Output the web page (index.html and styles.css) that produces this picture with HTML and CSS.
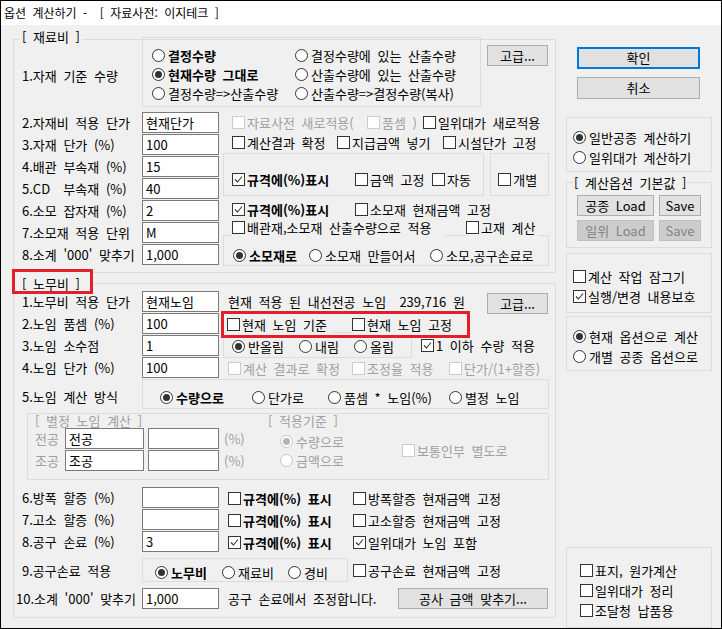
FILE: index.html
```html
<!DOCTYPE html>
<html lang="ko">
<head>
<meta charset="utf-8">
<title>옵션 계산하기</title>
<link rel="stylesheet" href="styles.css">
</head>
<body>
<div class="win">
  <div class="title">옵션 계산하기 -&nbsp; [ 자료사전: 이지테크 ]</div>
  <div class="main">
    <div class="left">
      <section class="grp g1">
        <span class="legend">[ 재료비 ]</span>
        <div class="r1">
          <div class="lbl l1lbl">1.자재 기준 수량</div>
          <div class="rbox">
            <span class="rb b"><i class="rd"></i>결정수량</span>
            <span class="rb"><i class="rd"></i>결정수량에 있는 산출수량</span>
            <span class="rb b"><i class="rd on"></i>현재수량 그대로</span>
            <span class="rb"><i class="rd"></i>산출수량에 있는 산출수량</span>
            <span class="rb"><i class="rd"></i>결정수량=&gt;산출수량</span>
            <span class="rb"><i class="rd"></i>산출수량=&gt;결정수량(복사)</span>
          </div>
          <button class="btn adv">고급...</button>
        </div>
        <div class="r2">
          <div class="fields">
            <div class="row"><div class="lbl">2.자재비 적용 단가</div><div class="inp">현재단가</div></div>
            <div class="row"><div class="lbl">3.자재 단가 (%)</div><div class="inp">100</div></div>
            <div class="row"><div class="lbl">4.배관 부속재 (%)</div><div class="inp">15</div></div>
            <div class="row"><div class="lbl">5.CD  부속재 (%)</div><div class="inp">40</div></div>
            <div class="row"><div class="lbl">6.소모 잡자재 (%)</div><div class="inp">2</div></div>
            <div class="row"><div class="lbl">7.소모재 적용 단위</div><div class="inp">M</div></div>
            <div class="row"><div class="lbl">8.소계 '000' 맞추기</div><div class="inp">1,000</div></div>
          </div>
          <div class="opts">
            <div class="ln lnA">
              <span class="cb dis"><i></i>자료사전 새로적용(</span>
              <span class="cb dis"><i></i>품셈 )</span>
              <span class="cb"><i></i>일위대가 새로적용</span>
            </div>
            <div class="ln lnB">
              <span class="cb"><i></i>계산결과 확정</span>
              <span class="cb"><i></i>지급금액 넣기</span>
              <span class="cb"><i></i>시설단가 고정</span>
            </div>
            <div class="boxes">
              <div class="bx bx1">
                <span class="cb b"><i class="on"><svg viewBox="0 0 11 11" width="11" height="11"><path d="M2 5.5 L4.5 8 L9 2.5" fill="none" stroke="#333" stroke-width="1.1"/></svg></i>규격에(%)표시</span>
                <span class="cb"><i></i>금액 고정</span>
                <span class="cb"><i></i>자동</span>
              </div>
              <div class="bx bx2"><span class="cb"><i></i>개별</span></div>
            </div>
            <div class="ln lnC">
              <span class="cb b"><i class="on"><svg viewBox="0 0 11 11" width="11" height="11"><path d="M2 5.5 L4.5 8 L9 2.5" fill="none" stroke="#333" stroke-width="1.1"/></svg></i>규격에(%)표시</span>
              <span class="cb"><i></i>소모재 현재금액 고정</span>
            </div>
            <div class="ln lnD">
              <span class="cb"><i></i>배관재,소모재 산출수량으로 적용</span>
              <span class="cb"><i></i>고재 계산</span>
            </div>
            <div class="bx bxE">
              <span class="rb b"><i class="rd on"></i>소모재로</span>
              <span class="rb"><i class="rd"></i>소모재 만들어서</span>
              <span class="rb"><i class="rd"></i>소모,공구손료로</span>
            </div>
          </div>
        </div>
      </section>

      <section class="grp g2">
        <span class="legend red">[ 노무비 ]</span>
        <div class="t2">
          <div class="fields">
            <div class="row"><div class="lbl">1.노무비 적용 단가</div><div class="inp">현재노임</div></div>
            <div class="row"><div class="lbl">2.노임 품셈 (%)</div><div class="inp">100</div></div>
            <div class="row"><div class="lbl">3.노임 소수점</div><div class="inp">1</div></div>
            <div class="row"><div class="lbl">4.노임 단가 (%)</div><div class="inp">100</div></div>
          </div>
          <div class="opts">
            <div class="ln2 ln2a">
              <span class="txt">현재 적용 된 내선전공 노임&nbsp; 239,716 원</span>
              <button class="btn adv2">고급...</button>
            </div>
            <div class="redbox">
              <span class="cb"><i></i>현재 노임 기준</span>
              <span class="cb"><i></i>현재 노임 고정</span>
            </div>
            <div class="ln2 ln2c">
              <div class="bx box3">
                <span class="rb"><i class="rd on"></i>반올림</span>
                <span class="rb"><i class="rd"></i>내림</span>
                <span class="rb"><i class="rd"></i>올림</span>
              </div>
              <span class="cb"><i class="on"><svg viewBox="0 0 11 11" width="11" height="11"><path d="M2 5.5 L4.5 8 L9 2.5" fill="none" stroke="#333" stroke-width="1.1"/></svg></i>1 이하 수량 적용</span>
            </div>
            <div class="ln ln2d">
              <span class="cb dis"><i></i>계산 결과로 확정</span>
              <span class="cb dis"><i></i>조정율 적용</span>
              <span class="cb dis"><i></i>단가/(1+할증)</span>
            </div>
          </div>
        </div>

        <div class="row5">
          <div class="lbl">5.노임 계산 방식</div>
          <div class="bx box5">
            <span class="rb b"><i class="rd on"></i>수량으로</span>
            <span class="rb"><i class="rd"></i>단가로</span>
            <span class="rb"><i class="rd"></i>품셈 * 노임(%)</span>
            <span class="rb"><i class="rd"></i>별정 노임</span>
          </div>
        </div>

        <div class="bx bj">
          <div class="bjc1">
            <div class="hdr">[ 별정 노임 계산 ]</div>
            <div class="bjrow"><span class="bjl">전공</span><div class="inp i1">전공</div><div class="inp i2"></div><span class="pct">(%)</span></div>
            <div class="bjrow"><span class="bjl">조공</span><div class="inp i1">조공</div><div class="inp i2"></div><span class="pct">(%)</span></div>
          </div>
          <div class="bjc2">
            <div class="hdr">[ 적용기준 ]</div>
            <span class="rb dis first"><i class="rd on"></i>수량으로</span>
            <span class="rb dis"><i class="rd"></i>금액으로</span>
          </div>
          <div class="bjc3">
            <span class="cb dis"><i></i>보통인부 별도로</span>
          </div>
        </div>

        <div class="rows68">
          <div class="row">
            <div class="lbl">6.방폭 할증 (%)</div><div class="inp"></div>
            <div class="ctl2">
              <span class="cb b"><i></i>규격에(%) 표시</span>
              <span class="cb"><i></i>방폭할증 현재금액 고정</span>
            </div>
          </div>
          <div class="row">
            <div class="lbl">7.고소 할증 (%)</div><div class="inp"></div>
            <div class="ctl2">
              <span class="cb b"><i></i>규격에(%) 표시</span>
              <span class="cb"><i></i>고소할증 현재금액 고정</span>
            </div>
          </div>
          <div class="row">
            <div class="lbl">8.공구 손료 (%)</div><div class="inp">3</div>
            <div class="ctl2">
              <span class="cb b"><i class="on"><svg viewBox="0 0 11 11" width="11" height="11"><path d="M2 5.5 L4.5 8 L9 2.5" fill="none" stroke="#333" stroke-width="1.1"/></svg></i>규격에(%) 표시</span>
              <span class="cb"><i class="on"><svg viewBox="0 0 11 11" width="11" height="11"><path d="M2 5.5 L4.5 8 L9 2.5" fill="none" stroke="#333" stroke-width="1.1"/></svg></i>일위대가 노임 포함</span>
            </div>
          </div>
        </div>

        <div class="row9">
          <div class="lbl">9.공구손료 적용</div>
          <div class="bx box9">
            <span class="rb b"><i class="rd on"></i>노무비</span>
            <span class="rb"><i class="rd"></i>재료비</span>
            <span class="rb"><i class="rd"></i>경비</span>
          </div>
          <span class="cb"><i></i>공구손료 현재금액 고정</span>
        </div>

        <div class="row10">
          <div class="lbl">10.소계 '000' 맞추기</div>
          <div class="inp">1,000</div>
          <span class="txt">공구 손료에서 조정합니다.</span>
          <button class="btn fit">공사 금액 맞추기...</button>
        </div>
      </section>
    </div>

    <div class="right">
      <button class="btn def">확인</button>
      <button class="btn cancel">취소</button>
      <div class="bx rA">
        <span class="rb"><i class="rd on"></i>일반공종 계산하기</span>
        <span class="rb"><i class="rd"></i>일위대가 계산하기</span>
      </div>
      <div class="bx rB">
        <span class="legend lg2">[ 계산옵션 기본값 ]</span>
        <div class="ld">
          <button class="btn">공종 Load</button>
          <button class="btn">Save</button>
          <button class="btn off">일위 Load</button>
          <button class="btn off">Save</button>
        </div>
      </div>
      <div class="bx rC">
        <span class="cb"><i></i>계산 작업 잠그기</span>
        <span class="cb"><i class="on"><svg viewBox="0 0 11 11" width="11" height="11"><path d="M2 5.5 L4.5 8 L9 2.5" fill="none" stroke="#333" stroke-width="1.1"/></svg></i>실행/변경 내용보호</span>
      </div>
      <div class="bx rD">
        <span class="rb"><i class="rd on"></i>현재 옵션으로 계산</span>
        <span class="rb"><i class="rd"></i>개별 공종 옵션으로</span>
      </div>
      <div class="bx rE">
        <span class="cb"><i></i>표지, 원가계산</span>
        <span class="cb"><i></i>일위대가 정리</span>
        <span class="cb"><i></i>조달청 납품용</span>
      </div>
    </div>
  </div>
</div>
</body>
</html>
```

FILE: styles.css
```css
* { box-sizing: border-box; }
html, body { margin: 0; padding: 0; }
body { width: 722px; height: 629px; overflow: hidden; background: #f0f0f0; }

.win {
  width: 722px; height: 629px;
  border: 1px solid #000;
  background: #f0f0f0;
  font-family: "Noto Sans CJK KR", "Noto Sans", sans-serif;
  font-size: 13px;
  line-height: 19px;
  color: #000;
  word-spacing: 3px;
}
.title {
  height: 24px; background: #fff;
  font-size: 12px; line-height: 23px;
  padding-left: 3px; white-space: pre;
}
.main { display: flex; padding: 14px 0 0 12px; height: 603px; }
.left { width: 543px; display: flex; flex-direction: column; gap: 10px; }

/* group boxes */
.grp { position: relative; border: 1px solid #dcdcdc; }
.g1 { height: 234px; }
.g2 { height: 335px; padding-top: 7px; }
.bx { border: 1px solid #dcdcdc; }
.legend {
  position: absolute; top: -13px; left: 6px;
  padding: 0 2px; background: #f0f0f0; white-space: pre;
}
.legend.red {
  left: -2px; top: -15px; width: 81px; height: 25px;
  border: 3px solid #e3202a; padding: 4px 0 0 7px;
  line-height: 15px;
}

/* generic controls */
.lbl { width: 128px; padding-left: 8px; white-space: pre; line-height: 21px; }
.row { display: flex; height: 22px; }
.inp {
  width: 77px; height: 21px; background: #fff;
  border: 1px solid #7a7a7a; padding-left: 3px;
  line-height: 19px; white-space: pre; overflow: hidden;
}
.cb, .rb {
  display: inline-flex; align-items: center; white-space: pre;
  height: 19px; background: #f0f0f0;
}
.cb i {
  flex: none; width: 13px; height: 13px; margin-right: 2px;
  border: 1px solid #333; background: #fff;
  display: flex; align-items: center; justify-content: center;
}
.rb i {
  flex: none; position: relative; width: 13px; height: 13px; margin-right: 3px;
  border: 1px solid #333; border-radius: 50%; background: #fff;
}
.rb i.on::after {
  content: ""; position: absolute; inset: 2px;
  border-radius: 50%; background: #333;
}
.b { font-weight: bold; }
.dis { color: #a0a0a0; }
.cb.dis i { border-color: #cccccc; }
.rb.dis i { border-color: #c4c4c4; }
.rb.dis i.on::after { background: #b4b4b4; }

.btn {
  font: inherit; word-spacing: inherit; color: #000;
  background: #e1e1e1; border: 1px solid #adadad;
  padding: 0; height: 21px; line-height: 18px;
}
.btn.def { border: 2px solid #0078d7; }
.btn.off { background: #cccccc; border-color: #bfbfbf; color: #838383; }

/* group 1 */
.r1 { display: flex; margin-top: -3px; }
.l1lbl { align-self: center; padding-top: 7px; }
.rbox {
  width: 339px; height: 70px; padding: 8px 0 0 9px;
  border: 1px solid #dcdcdc;
  display: grid; grid-template-columns: 143px auto; grid-auto-rows: 19px;
}
.adv { margin: 8px 0 0 6px; width: 61px; }
.r2 { display: flex; margin-top: 5px; }
.t2 { display: flex; }
.fields { width: 205px; }
.opts { margin-left: 4px; width: 326px; }
.ln { display: grid; align-items: center; justify-items: start; padding-left: 9px; }
.lnA { height: 20px; grid-template-columns: 135px 56px auto; }
.lnB { height: 21px; grid-template-columns: 105px 106px auto; }
.boxes { display: flex; gap: 6px; height: 43px; }
.bx1 {
  width: 262px; padding: 16px 0 0 8px;
  display: grid; grid-template-columns: 123px 77px auto; align-content: start;
}
.bx2 { width: 59px; padding: 16px 0 0 7px; }
.lnC { height: 18px; margin-top: 4px; grid-template-columns: 123px auto; }
.lnD { height: 18px; grid-template-columns: 234px auto; }
.lnD .cb { height: 18px; }
.lnD .cb:first-child { width: 213px; }
.lnD .cb:last-child { width: 72px; }
.bxE {
  height: 31px; margin-top: -1px; padding: 10px 0 0 9px;
  display: grid; grid-template-columns: 76px 121px auto; align-content: start;
}
.bxE .rb { height: 18px; }

/* group 2 */
.ln2 { display: flex; }
.ln2a { height: 20px; align-items: center; }
.ln2a .txt { padding-left: 5px; white-space: pre; }
.adv2 { margin: 2px 1px 0 auto; align-self: flex-start; width: 61px; }
.redbox {
  position: relative;
  margin-left: -2px; width: 249px; height: 27px;
  border: 3px solid #e3202a; padding-left: 3px;
  display: grid; grid-template-columns: 125px auto; align-items: center; justify-items: start;
}
.redbox .cb:first-child { width: 106px; }
.ln2c { margin-top: -6px; height: 26px; align-items: center; }
.box3 {
  width: 189px; height: 26px; padding: 4px 0 0 8px;
  display: grid; grid-template-columns: 67px 55px auto; align-content: start;
}
.box3 .rb { height: 18px; }
.ln2c .cb { margin-left: 9px; }
.ln2d { height: 21px; padding-left: 5px; grid-template-columns: 124px 97px auto; }

.row5 { display: flex; height: 30px; }
.row5 .lbl { padding-top: 8px; line-height: 19px; }
.box5 {
  width: 407px; height: 30px; padding: 8px 0 0 17px;
  display: grid; grid-template-columns: 92px 76px 121px auto; align-content: start;
}

.bj {
  display: flex; margin: 4px 0 0 13px; width: 522px; height: 67px;
  padding-left: 7px; color: #a0a0a0;
}
.hdr { height: 14px; line-height: 13px; white-space: pre; }
.bjc1 { width: 233px; }
.bjrow { display: flex; height: 22px; }
.bjl { width: 30px; line-height: 21px; }
.bj .inp { color: #000; }
.bj .i1 { width: 79px; }
.bj .i2 { width: 71px; margin-left: 4px; }
.pct { margin-left: 5px; line-height: 21px; }
.bjc2 { width: 134px; display: flex; flex-direction: column; align-items: flex-start; }
.bjc2 .rb { margin-left: 12px; }
.bjc2 .first { margin-top: 4px; }
.bjc3 { padding-top: 27px; }

.rows68 { margin-top: 7px; }
.ctl2 {
  margin-left: 9px; display: grid; grid-template-columns: 125px auto;
  align-items: center; justify-items: start; height: 22px;
}
.row9 { display: flex; align-items: center; margin-top: 5px; height: 24px; }
.row9 .lbl { line-height: 19px; }
.box9 {
  width: 206px; height: 24px; padding: 4px 0 0 12px;
  display: grid; grid-template-columns: 67px 66px auto; align-content: start;
}
.box9 .rb { height: 18px; }
.row9 > .cb { margin-left: 5px; }
.row10 { display: flex; align-items: center; margin-top: 6px; height: 21px; padding-right: 7px; }
.row10 .lbl { padding-left: 2px; }
.row10 .txt { margin-left: 9px; white-space: pre; }
.fit { margin-left: auto; width: 150px; }

/* right column */
.right { margin-left: 10px; width: 146px; display: flex; flex-direction: column; align-items: flex-start; }
.right > .btn { margin: 8px 0 0 11px; width: 123px; height: 22px; }
.rA, .rB, .rC, .rD, .rE { width: 146px; display: flex; flex-direction: column; align-items: flex-start; }
.rA { margin-top: 18px; padding: 9px 0 4px 6px; }
.rA .rb, .rC .cb, .rD .rb, .rE .cb { height: 20px; }
.rB { position: relative; margin-top: 10px; padding: 12px 0 6px 10px; }
.lg2 { top: -10px; left: 6px; padding: 0 1px; }
.ld { display: grid; grid-template-columns: 77px 42px; grid-auto-rows: 21px; column-gap: 5px; row-gap: 4px; }
.ld .btn { width: 100%; }
.rC { margin-top: 5px; padding: 12px 0 6px 6px; }
.rD { margin-top: 3px; padding: 9px 0 4px 6px; }
.rE { margin-top: auto; height: 81px; padding: 12px 0 0 13px; }
```
